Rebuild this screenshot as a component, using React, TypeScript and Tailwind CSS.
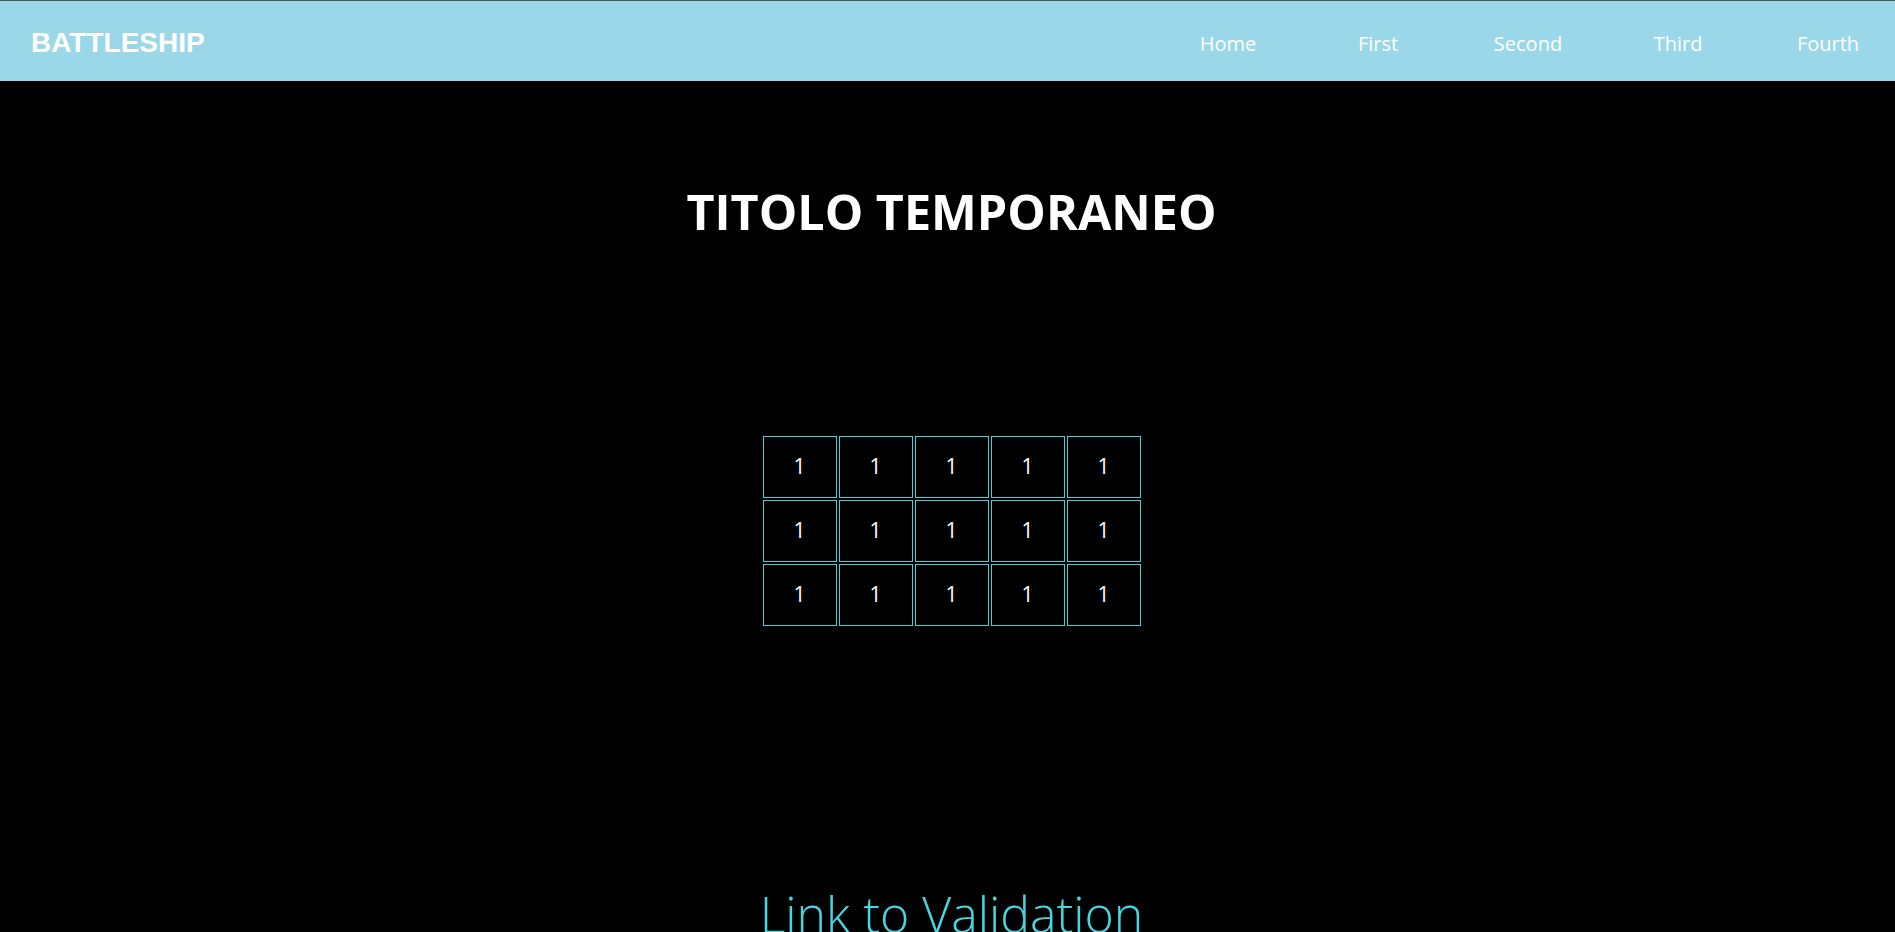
const navItems = ["Home", "First", "Second", "Third", "Fourth"]

const rows = [0, 1, 2]
const cols = [0, 1, 2, 3, 4]

export default function App() {
  return (
    <div className="h-[932px] w-full overflow-hidden bg-black">
      <div className="w-[1903px] font-['Open_Sans',sans-serif]">
        {/* Navbar */}
        <nav className="flex h-[81px] items-center justify-between border-t border-[#555555] bg-[#9ad8e9]">
          <div className="pl-[31px] pt-[3px] font-['Liberation_Sans',Arial,sans-serif] text-[28px] font-bold text-white">
            BATTLESHIP
          </div>
          <ul className="flex pt-[5px]">
            {navItems.map((item) => (
              <li key={item} className="w-[150px] text-center text-[20px] text-white">
                {item}
              </li>
            ))}
          </ul>
        </nav>

        {/* Main */}
        <main className="flex flex-col items-center">
          <h1 className="mt-[98px] text-[48.5px] leading-[64px] font-bold text-white">TITOLO TEMPORANEO</h1>

          <div className="mt-[193px] grid grid-cols-5 gap-[2px]">
            {rows.map((r) =>
              cols.map((c) => (
                <div
                  key={`${r}-${c}`}
                  className="flex h-[62px] w-[74px] items-center justify-center border border-[#3fd0dc] text-[21px] text-white"
                >
                  1
                </div>
              ))
            )}
          </div>

          <a href="#" className="mt-[251px] text-[50px] font-light text-[#44d8e2]">
            Link to Validation
          </a>
        </main>
      </div>
    </div>
  )
}
